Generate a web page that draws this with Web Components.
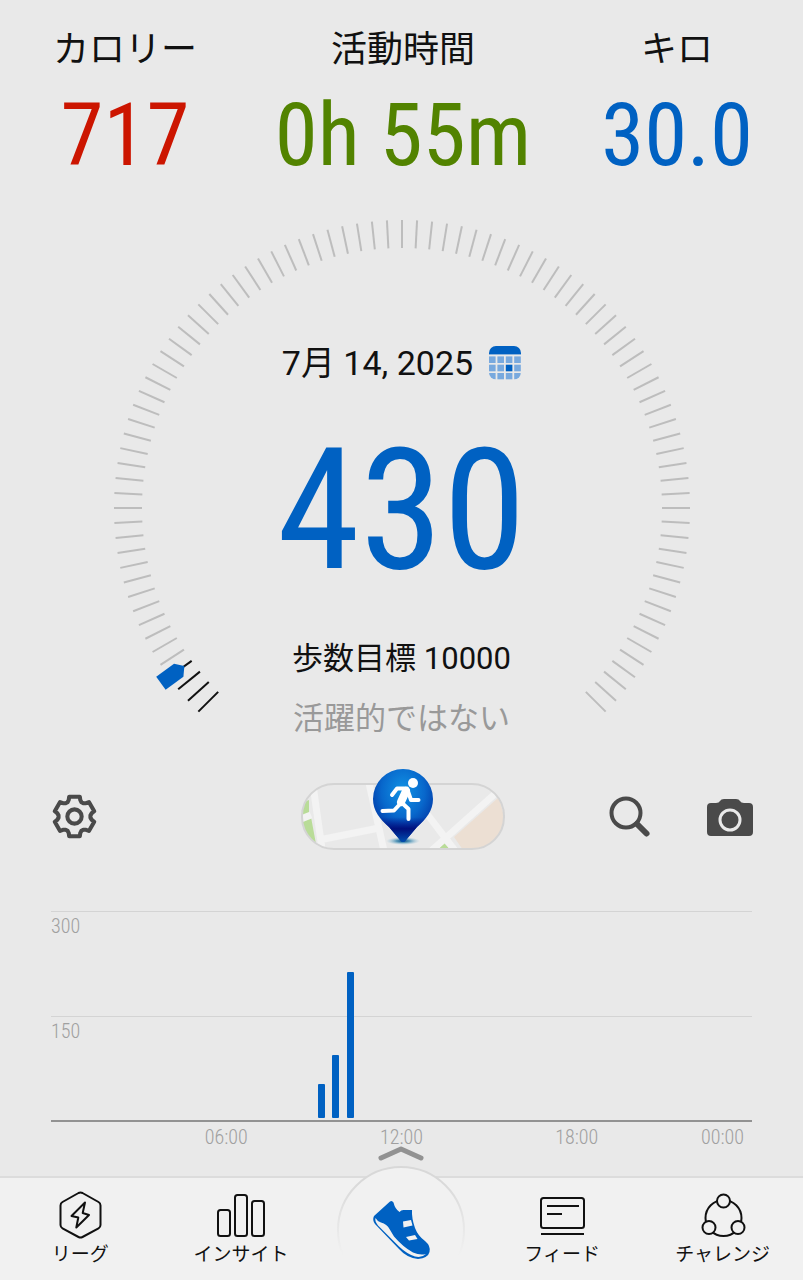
<!DOCTYPE html>
<html lang="ja">
<head>
<meta charset="utf-8">
<meta name="viewport" content="width=device-width, initial-scale=1">
<title>歩数計</title>
<style>
body{
    margin: 0;
    background: #e9e9e9;
    color: #111;
    font-family: "Roboto Condensed", Roboto, "Noto Sans CJK JP", sans-serif;
}
</style>
</head>
<body>
<step-app>
    <step-stats>
        <step-stat color="#cc1500"><span slot="label">カロリー</span>717</step-stat>
        <step-stat color="#528300"><span slot="label">活動時間</span>0h 55m</step-stat>
        <step-stat color="#0061c2"><span slot="label">キロ</span>30.0</step-stat>
    </step-stats>
    <step-gauge value="3">
        <span slot="date">7月 14, 2025</span>
        <span slot="count">430</span>
        <span slot="goal">歩数目標 10000</span>
        <span slot="status">活躍的ではない</span>
    </step-gauge>
    <step-toolbar></step-toolbar>
    <step-chart></step-chart>
    <step-nav>
        <nav-item icon="league">リーグ</nav-item>
        <nav-item icon="insight">インサイト</nav-item>
        <nav-home></nav-home>
        <nav-item icon="feed">フィード</nav-item>
        <nav-item icon="challenge">チャレンジ</nav-item>
    </step-nav>
</step-app>

<script>
class StepElement extends HTMLElement{
    constructor(){
        super()
        this.shadow = this.attachShadow({mode:'open'})
    }
    connectedCallback(){
        this.render()
    }
    render(){
        this.shadow.innerHTML = `
        <style>
        *{
            box-sizing: border-box;
        }
        button{
            display: block;
            padding: 0;
            border: none;
            background: none;
            cursor: pointer;
        }
        svg{
            display: block;
        }
        ${this.css}
        </style>
        ${this.html}`
    }
}

class StepApp extends StepElement{
    get css(){
        return `
        :host{
            display: flex;
            flex-direction: column;
            min-height: 100vh;
        }`
    }
    get html(){
        return `<slot></slot>`
    }
}
customElements.define('step-app', StepApp)

class StepStats extends StepElement{
    get css(){
        return `
        :host{
            display: grid;
            grid-template-columns: 1fr auto 1fr;
            padding: 22px 50px 0 53px;
        }
        ::slotted(:first-child){
            justify-self: start;
        }
        ::slotted(:last-child){
            justify-self: end;
        }`
    }
    get html(){
        return `<slot></slot>`
    }
}
customElements.define('step-stats', StepStats)

class StepStat extends StepElement{
    get css(){
        return `
        :host{
            display: flex;
            flex-direction: column;
            align-items: center;
        }
        .label{
            font-size: 36px;
            line-height: 56px;
        }
        .value{
            font-size: 87px;
            line-height: 114px;
            color: ${this.getAttribute('color')};
            white-space: nowrap;
        }`
    }
    get html(){
        return `
        <div class="label"><slot name="label"></slot></div>
        <div class="value"><slot></slot></div>`
    }
}
customElements.define('step-stat', StepStat)

class StepGauge extends StepElement{
    get css(){
        return `
        :host{
            display: grid;
            justify-items: center;
            margin-top: 28px;
        }
        .dial{
            grid-area: 1 / 1;
            width: 72%;
            max-width: 576px;
            overflow: visible;
        }
        .info{
            grid-area: 1 / 1;
            display: flex;
            flex-direction: column;
            align-items: center;
            padding-top: 119px;
            white-space: nowrap;
        }
        .date{
            display: flex;
            align-items: center;
            gap: 16px;
            font-family: Roboto, "Noto Sans CJK JP", sans-serif;
            font-size: 34px;
            line-height: 48px;
        }
        .count{
            margin: 36px 0;
            color: #0061c2;
            font-size: 168px;
            line-height: 176px;
        }
        .goal, .status{
            font-family: Roboto, "Noto Sans CJK JP", sans-serif;
            font-size: 31px;
            line-height: 48px;
        }
        .status{
            margin-top: 12px;
            color: #999;
        }`
    }
    // 91 ticks, one every 3 degrees, clockwise from bottom left
    get ticks(){
        var value = Number(this.getAttribute('value'))
        var out = ''
        for (var i = 90; i >= 0; i--){
            var color = i <= value ? '#111' : '#bdbdbd'
            out += `<line x1="548" y1="288" x2="576" y2="288" stroke="${color}" stroke-width="2" transform="rotate(${135 + i * 3} 288 288)"/>`
        }
        out += `<path d="M557 288L564 280H586V296H564Z" fill="#0061c2" transform="rotate(${135 + value * 3} 288 288)"/>`
        return out
    }
    get calendar(){
        var cells = ''
        for (var i = 0; i < 12; i++){
            var x = (i % 4) * 8.4
            var y = 10.4 + Math.floor(i / 4) * 8.3
            cells += `<rect x="${x}" y="${y}" width="6.6" height="6.6" fill="${i == 6 ? '#0061c2' : '#78a9de'}"/>`
        }
        return `
        <svg width="32" height="34" viewBox="0 0 32 34">
            <clipPath id="cal"><rect width="32" height="33.6" rx="7"/></clipPath>
            <g clip-path="url(#cal)"><rect width="32" height="8.4" fill="#0061c2"/>${cells}</g>
        </svg>`
    }
    get html(){
        return `
        <svg class="dial" viewBox="0 0 576 493">${this.ticks}</svg>
        <div class="info">
            <div class="date"><slot name="date"></slot><button aria-label="カレンダー">${this.calendar}</button></div>
            <div class="count"><slot name="count"></slot></div>
            <div class="goal"><slot name="goal"></slot></div>
            <div class="status"><slot name="status"></slot></div>
        </div>`
    }
}
customElements.define('step-gauge', StepGauge)

class StepToolbar extends StepElement{
    get css(){
        return `
        :host{
            display: grid;
            grid-template-columns: 1fr auto 1fr;
            align-items: center;
            margin-top: 26px;
            padding: 0 50px 0 52px;
        }
        .right{
            display: flex;
            justify-content: flex-end;
            align-items: center;
            gap: 56px;
        }
        .icon{
            margin-top: 14px;
        }`
    }
    // outline of a six tooth cog
    get cog(){
        var points = []
        for (var i = 0; i < 6; i++){
            [[-26,15.6],[-19,17.2],[-15,20],[15,20],[19,17.2],[26,15.6]].forEach(([a, r])=>{
                var rad = (i * 60 - 90 + a) * Math.PI / 180
                points.push((22 + r * Math.cos(rad)).toFixed(1) + ',' + (22 + r * Math.sin(rad)).toFixed(1))
            })
        }
        return points.join(' ')
    }
    get html(){
        return `
        <div><button class="icon" aria-label="設定">
            <svg width="45" height="45" viewBox="0 0 44 44" fill="none" stroke="#4a4a4a" stroke-width="4" stroke-linejoin="round">
                <polygon points="${this.cog}"/>
                <circle cx="22" cy="22" r="7"/>
            </svg>
        </button></div>
        <button aria-label="マップ">
            <svg width="204" height="81" viewBox="0 0 204 81">
                <defs>
                    <clipPath id="pill"><rect x="1" y="15" width="202" height="65" rx="32"/></clipPath>
                    <radialGradient id="pin" cx="50%" cy="30%" r="65%">
                        <stop offset="0" stop-color="#1193e4"/>
                        <stop offset=".55" stop-color="#0868cc"/>
                        <stop offset="1" stop-color="#0131a0"/>
                    </radialGradient>
                    <linearGradient id="tip" x1="0" y1="0" x2="0" y2="1">
                        <stop offset=".66" stop-color="#00108a" stop-opacity="0"/>
                        <stop offset=".82" stop-color="#00107c"/>
                        <stop offset="1" stop-color="#0050b0"/>
                    </linearGradient>
                    <radialGradient id="ground">
                        <stop offset="0" stop-color="#00407e"/>
                        <stop offset=".4" stop-color="#3685ad" stop-opacity=".8"/>
                        <stop offset="1" stop-color="#9fc9dc" stop-opacity="0"/>
                    </radialGradient>
                </defs>
                <g clip-path="url(#pill)">
                    <path d="M0 34L8 31V44L0 48ZM0 52L10 48L15 75L6 66ZM143 74L149 80H137Z" fill="#b9dc98"/>
                    <path d="M198 28L204 51L198 72L173 81H162L153 68Z" fill="#ecdfd3"/>
                    <path d="M12 16L21 80M18 71L78 59M68 14L83 82M120 37L155 83M196 23L130 82M0 50L10 46" stroke="#f3f3f3" stroke-width="7" fill="none"/>
                </g>
                <rect x="1" y="15" width="202" height="65" rx="32" fill="none" stroke="#d4d4d4" stroke-width="2"/>
                <ellipse cx="102" cy="72" rx="17" ry="4" fill="url(#ground)"/>
                <path d="M102 0A30 30 0 0 1 132 30C132 42 125 50 116 58L105 71Q102 75 99 71L88 58C79 50 72 42 72 30A30 30 0 0 1 102 0Z" fill="url(#pin)"/>
                <path d="M102 0A30 30 0 0 1 132 30C132 42 125 50 116 58L105 71Q102 75 99 71L88 58C79 50 72 42 72 30A30 30 0 0 1 102 0Z" fill="url(#tip)"/>
                <circle cx="112" cy="14" r="5" fill="#fff"/>
                <g fill="none" stroke="#fff" stroke-width="4" stroke-linecap="round" stroke-linejoin="round">
                    <path d="M91 26L96 19.500H106L110 31H117.500M100 34L93 41.500L81.500 42M100 33L107.500 40V50"/>
                    <path d="M105 22L100 33" stroke-width="8"/>
                </g>
            </svg>
        </button>
        <div class="right">
            <button class="icon" aria-label="検索">
                <svg width="42" height="42" viewBox="0 0 42 42" fill="none" stroke="#4a4a4a" stroke-linecap="round">
                    <circle cx="17" cy="17" r="14.500" stroke-width="4"/>
                    <path d="M28 28L37.500 37.500" stroke-width="6"/>
                </svg>
            </button>
            <button class="icon" aria-label="カメラ">
                <svg width="46" height="38" viewBox="0 0 46 38">
                    <path d="M4 5H9Q12 5 13 3Q14 1 17 1H29Q32 1 33 3Q34 5 37 5H42Q46 5 46 9V34Q46 38 42 38H4Q0 38 0 34V9Q0 5 4 5Z" fill="#4a4a4a"/>
                    <circle cx="23" cy="22" r="10" fill="none" stroke="#e9e9e9" stroke-width="3"/>
                </svg>
            </button>
        </div>`
    }
}
customElements.define('step-toolbar', StepToolbar)

class StepChart extends StepElement{
    get css(){
        return `
        :host{
            display: block;
            margin: 61px 51px 0;
            color: #a0a0a0;
            font-size: 20px;
            font-weight: 300;
        }
        .plot{
            display: grid;
            grid-template-rows: 105px 104px;
            border-bottom: 2px solid #929292;
        }
        .row{
            grid-column: 1;
            border-top: 1px solid #d4d4d4;
            line-height: 28px;
        }
        .bars{
            grid-area: 1 / 1 / 3 / 2;
            display: grid;
            grid-template-columns: repeat(48, 1fr);
            align-items: end;
            justify-items: center;
            padding-bottom: 2px;
        }
        .bar{
            width: 7px;
            border-radius: 1px;
            background: #0061c2;
        }
        .hours{
            display: grid;
            grid-template-columns: repeat(8, 1fr);
            line-height: 30px;
            text-align: center;
        }
        .hours span{
            grid-column: span 2;
        }
        .hours span:first-child{
            grid-column: 2 / 4;
        }
        .hours span:last-child{
            grid-column: 8;
            justify-self: end;
            padding-right: 8px;
        }`
    }
    // one bar for each half hour of the day
    get bars(){
        return [[19, 34], [20, 63], [21, 146]].map(([slot, height])=>
            `<div class="bar" style="grid-column:${slot};grid-row:1;height:${height}px"></div>`
        ).join('')
    }
    get html(){
        return `
        <div class="plot">
            <div class="row" style="grid-row:1">300</div>
            <div class="row" style="grid-row:2">150</div>
            <div class="bars">${this.bars}</div>
        </div>
        <div class="hours"><span>06:00</span><span>12:00</span><span>18:00</span><span>00:00</span></div>`
    }
}
customElements.define('step-chart', StepChart)

class StepNav extends StepElement{
    get css(){
        return `
        :host{
            display: block;
            margin-top: auto;
        }
        nav{
            display: grid;
            grid-template-columns: repeat(5, 1fr);
            height: 104px;
            border-top: 2px solid #dcdcdc;
            background: #f1f1f1;
        }`
    }
    get html(){
        return `<nav><slot></slot></nav>`
    }
}
customElements.define('step-nav', StepNav)

const icons = {
    league: `<path d="M22.500 2L6.500 11Q4.500 12.200 4.500 14.500V34Q4.500 36.200 6.500 37.300L22.500 46Q24.500 47 26.500 46L42.500 37.300Q44.500 36.200 44.500 34V14.500Q44.500 12.200 42.500 11L26.500 2Q24.500 1 22.500 2Z"/>
        <path d="M29 11.500L26.700 22L33 24L20.300 36.500L22.300 26.500L15.500 25Z"/>`,
    insight: `<rect x="1" y="19" width="12" height="26" rx="2.500"/><rect x="18" y="4" width="12" height="41" rx="2.500"/><rect x="35" y="10" width="12" height="35" rx="2.500"/>`,
    feed: `<rect x="3" y="7" width="43" height="30" rx="2.500"/><path d="M9 15H41M9 23H24M3 43H46"/>`,
    challenge: `<circle cx="24.500" cy="27" r="18"/><g fill="#f1f1f1"><circle cx="24.500" cy="10" r="6.500"/><circle cx="10" cy="36.500" r="6.500"/><circle cx="39" cy="36.500" r="6.500"/></g>`
}

class NavItem extends StepElement{
    get css(){
        return `
        :host{
            display: block;
        }
        a{
            display: flex;
            flex-direction: column;
            align-items: center;
            padding-top: 13px;
            color: #111;
            font-size: 19px;
            line-height: 32px;
            text-decoration: none;
            white-space: nowrap;
        }`
    }
    get html(){
        return `
        <a href="#">
            <svg width="48" height="48" viewBox="0 0 48 48" fill="none" stroke="#111" stroke-width="2" stroke-linejoin="round" overflow="visible">${icons[this.getAttribute('icon')]}</svg>
            <span><slot></slot></span>
        </a>`
    }
}
customElements.define('nav-item', NavItem)

class NavHome extends StepElement{
    get css(){
        return `
        :host{
            display: flex;
            justify-content: center;
            margin-top: -34px;
        }`
    }
    get html(){
        return `
        <a href="#" aria-label="ホーム">
            <svg width="130" height="136" viewBox="0 0 130 136">
                <linearGradient id="rim" x1="0" y1="0" x2="0" y2="1">
                    <stop offset=".1" stop-color="#d8d8d8"/>
                    <stop offset=".7" stop-color="#f1f1f1"/>
                </linearGradient>
                <circle cx="65" cy="86" r="63" fill="#f1f1f1" stroke="url(#rim)" stroke-width="2"/>
                <path d="M45 14L65 5L85 14" fill="none" stroke="#929292" stroke-width="5" stroke-linecap="round" stroke-linejoin="round"/>
                <path d="M54 57.500Q56 56 57.500 58.500Q59 65 63.500 68Q65 66 67.500 66H76Q75.500 74 79 84Q82 92 89 97Q95 102 93.500 108Q92 114 82 115Q71 114 63 105L39 80Q36 76 38 72Z" fill="#0061c2"/>
                <path d="M39.500 74Q41 77 45 78.500Q51 80 53.500 85L58 92.500Q67 103 77 108.500Q84 111.500 90 110Q86 114 79 112.500Q71 110 63 102.500L42 81.500Q38.500 77 39.500 74Z" fill="#f1f1f1"/>
                <path d="M67 77.500L75 76L76.500 81.500L67.500 83.500ZM70 93L79 91L81.500 95L73 96.500Z" fill="#f1f1f1"/>
            </svg>
        </a>`
    }
}
customElements.define('nav-home', NavHome)
</script>
</body>
</html>
